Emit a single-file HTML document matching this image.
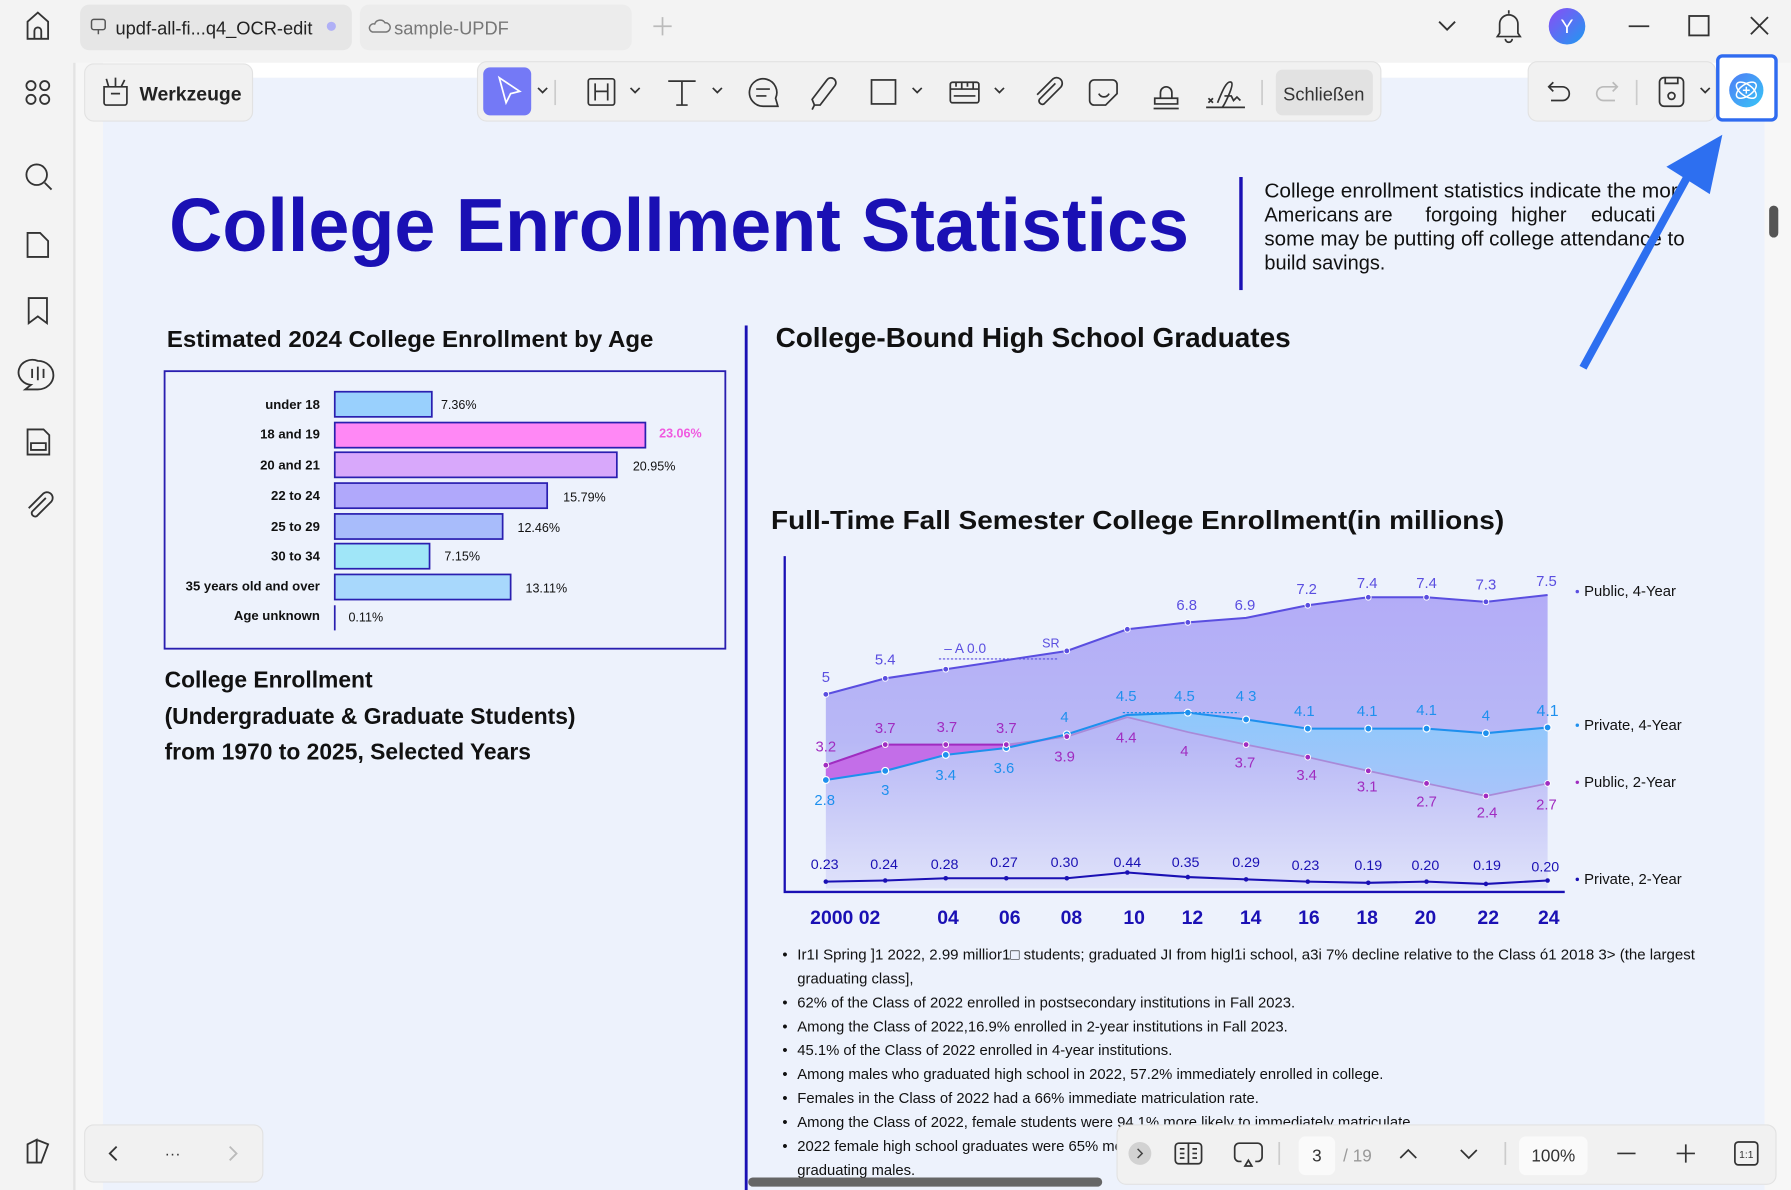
<!DOCTYPE html>
<html><head><meta charset="utf-8"><style>
html,body{margin:0;padding:0;width:1791px;height:1190px;overflow:hidden;background:#f3f3f3;}
svg{display:block}
text{font-family:"Liberation Sans",Arial,sans-serif}
</style></head><body>
<svg width="1791" height="1190" viewBox="0 0 1568 1042" xmlns="http://www.w3.org/2000/svg">
<defs>
<linearGradient id="g4" x1="0" y1="0" x2="0" y2="1"><stop offset="0" stop-color="#b3acf7"/><stop offset="0.5" stop-color="#b8b8f6"/><stop offset="1" stop-color="#dfe2fa"/></linearGradient>
<linearGradient id="gb" x1="0" y1="0" x2="0" y2="1"><stop offset="0" stop-color="#8ec8fb"/><stop offset="1" stop-color="#a9c4fa"/></linearGradient>
<linearGradient id="ai" x1="0" y1="0" x2="1" y2="1"><stop offset="0" stop-color="#4f7cf5"/><stop offset="1" stop-color="#38c6f7"/></linearGradient>
<linearGradient id="av" x1="0" y1="0" x2="1" y2="1"><stop offset="0" stop-color="#8b4cf6"/><stop offset="1" stop-color="#1e9af0"/></linearGradient>
</defs>
<rect width="1568" height="1042" fill="#f3f3f3"/>
<rect x="70" y="4" width="238" height="40" rx="8" fill="#e6e6e6"/>
<rect x="315" y="4" width="238" height="40" rx="8" fill="#ececec"/>
<g fill="none" stroke="#333" stroke-width="1.6">
<path d="M24 34 V19 L33 11 L42 19 V34 Z M30 34 V27 a3 3 0 0 1 6 0 V34"/>
</g>
<rect x="80" y="17" width="12" height="9" rx="2" fill="none" stroke="#555" stroke-width="1.3"/><path d="M86 26 v4" stroke="#555" stroke-width="1.3"/>
<text x="101" y="30" font-size="16" fill="#222">updf-all-fi...q4_OCR-edit</text>
<circle cx="290" cy="23" r="4" fill="#b0b0f6"/>
<path d="M326 28 h12 a4 4 0 0 0 -1 -8 a5 5 0 0 0 -9 1 a3.5 3.5 0 0 0 -2 7z" fill="none" stroke="#777" stroke-width="1.3"/>
<text x="345" y="30" font-size="16" fill="#777">sample-UPDF</text>
<path d="M580 15 v16 M572 23 h16" stroke="#bbb" stroke-width="1.5"/>
<path d="M1260 19 l7 7 l7 -7" fill="none" stroke="#333" stroke-width="1.6"/>
<path d="M1313 29 v-8 a8 8 0 0 1 16 0 v8 l2 3 h-20z M1318 34 a3 3 0 0 0 6 0 M1321 9 v3" fill="none" stroke="#333" stroke-width="1.5"/>
<circle cx="1372" cy="23" r="16" fill="url(#av)"/><text x="1372" y="29" font-size="17" fill="#fff" text-anchor="middle">Y</text>
<path d="M1426 23 h18" stroke="#333" stroke-width="1.6"/>
<rect x="1479" y="14" width="17" height="17" fill="none" stroke="#333" stroke-width="1.6"/>
<path d="M1533 15 l15 15 M1548 15 l-15 15" stroke="#333" stroke-width="1.6"/>
<rect x="0" y="55" width="64" height="987" fill="#f3f3f3"/>
<rect x="64" y="55" width="2" height="987" fill="#e3e3e3"/>
<g fill="none" stroke="#333" stroke-width="1.6">
<circle cx="27" cy="75" r="4"/><circle cx="39" cy="75" r="4"/><circle cx="27" cy="87" r="4"/><circle cx="39" cy="87" r="4"/>
<circle cx="32" cy="153" r="9"/><path d="M39 160 l6 6"/>
<path d="M24 204 h11 l7 7 v14 h-18z"/>
<path d="M25 261 h16 v22 l-8 -6 l-8 6z"/>
<path d="M33 316 a12 11 0 1 0 -6 21 l-5 4 h11 a12 11 0 0 0 0 -25z M28 323 v8 M33 321 v12 M38 323 v8"/>
<path d="M24 376 h14 l5 5 v17 h-19z M27 388 h13 v6 h-13z"/>
<path d="M40 436 l-12 12 a3 3 0 0 0 4 4 l13 -13 a5 5 0 0 0 -7 -7 l-13 13"/>
<path d="M24 1018 v-16 l8 -4 v20 z M32 998 l10 4 l-6 16 h-12"/>
</g>
<rect x="66" y="55" width="1502" height="987" fill="#f6f6f6"/>
<rect x="90" y="68" width="1455" height="974" fill="#edf2fc"/>
<rect x="90" y="55" width="1455" height="13" fill="#ffffff"/>
<rect x="1545" y="55" width="23" height="987" fill="#f7f7f7"/>
<rect x="1549" y="180" width="8" height="28" rx="4" fill="#555"/>
<rect x="74" y="56" width="147" height="50" rx="8" fill="#f1f1f1" stroke="#e2e2e2"/>
<rect x="418" y="54" width="791" height="52" rx="8" fill="#f1f1f1" stroke="#e2e2e2"/>
<rect x="1338" y="54" width="164" height="52" rx="8" fill="#f1f1f1" stroke="#e2e2e2"/>
<g fill="none" stroke="#333" stroke-width="1.5">
<path d="M91 76 h20 v14 a2 2 0 0 1 -2 2 h-16 a2 2 0 0 1 -2 -2z M97 82 h8 M95 76 l-2 -7 M101 76 v-8 M106 76 l3 -6"/>
</g>
<text x="122" y="88" font-size="17" font-weight="bold" fill="#222">Werkzeuge</text>
<rect x="423" y="59" width="42" height="42" rx="6" fill="#7479f6"/>
<path d="M437 68 l18 12 l-8 2 l-4 8z" fill="none" stroke="#fff" stroke-width="1.5"/>
<g fill="none" stroke="#333" stroke-width="1.5">
<path d="M471 77 l4 4 l4 -4"/>
<path d="M486 70 v22" stroke="#ccc"/>
<rect x="515" y="69" width="23" height="23" rx="2"/><path d="M521 73 v15 M532 73 v15 M521 80 h11"/>
<path d="M552 77 l4 4 l4 -4"/>
<path d="M585 71 h24 M597 71 v21 M592 92 h10"/>
<path d="M624 77 l4 4 l4 -4"/>
<path d="M668 93 a12 12 0 1 1 11 -7 l2 7z M662 78 h12 M662 84 h9"/>
<path d="M713 92 l-2 -5 l13 -17 a4 4 0 0 1 7 5 l-13 17z M713 92 l-2 4"/>
<rect x="763" y="70" width="21" height="21"/>
<path d="M799 77 l4 4 l4 -4"/>
<rect x="832" y="72" width="25" height="18" rx="2"/><path d="M832 78 h25 M837 72 v4 M842 72 v6 M847 72 v4 M852 72 v6 M835 84 h19"/>
<path d="M871 77 l4 4 l4 -4"/>
<path d="M924 73 l-14 14 a3 3 0 0 0 4 4 l15 -15 a5 5 0 0 0 -7 -7 l-14 14"/>
<path d="M958 70 h16 a4 4 0 0 1 4 4 v8 l-10 10 h-10 a4 4 0 0 1 -4 -4 v-14 a4 4 0 0 1 4 -4z M962 82 a5 5 0 0 0 9 0"/>
<path d="M1011 86 h20 v5 h-20z M1016 86 v-5 a5 5 0 1 1 10 0 v5 M1010 95 h22"/>
<path d="M1058 86 l4 4 M1062 86 l-4 4 M1056 94 h34 M1066 90 c4 -10 8 -20 12 -18 c3 2 -6 20 -8 22 M1072 84 h6 l2 4 l3 -3 l3 3"/>
<path d="M1105 70 v22" stroke="#ccc"/>
</g>
<rect x="1117" y="61" width="85" height="40" rx="6" fill="#e2e2e2"/>
<text x="1159" y="88" font-size="16" fill="#333" text-anchor="middle">Schließen</text>
<g fill="none" stroke="#333" stroke-width="1.5">
<path d="M1356 76 h12 a6 6 0 0 1 0 12 h-10 M1360 72 l-4 4 l4 4"/>
<path d="M1416 76 h-12 a6 6 0 0 0 0 12 h10 M1412 72 l4 4 l-4 4" stroke="#bbb"/>
<path d="M1433 70 v22" stroke="#ccc"/>
<rect x="1453" y="68" width="21" height="25" rx="4"/><path d="M1458 68 v5 h11 v-5"/><circle cx="1463.5" cy="84" r="3"/>
<path d="M1489 77 l4 4 l4 -4"/>
</g>
<rect x="1504" y="49" width="51" height="56" rx="4" fill="#fff" stroke="#2f6bf0" stroke-width="3"/>
<circle cx="1529" cy="79" r="15" fill="url(#ai)"/>
<g fill="none" stroke="#fff" stroke-width="1.3"><ellipse cx="1529" cy="79" rx="10" ry="5" transform="rotate(-35 1529 79)"/><ellipse cx="1529" cy="79" rx="10" ry="5" transform="rotate(35 1529 79)"/><path d="M1529 76 v6 M1526 79 h6"/></g>
<text x="148" y="220" font-size="66" font-weight="bold" fill="#1a10b4" textLength="893" lengthAdjust="spacingAndGlyphs">College Enrollment Statistics</text>
<rect x="1085" y="155" width="3" height="99" fill="#1a10b4"/>
<g font-size="17.5" fill="#111">
<text x="1107" y="173" textLength="362" lengthAdjust="spacingAndGlyphs">College enrollment statistics indicate the mor</text>
<text x="1107" y="194">Americans</text><text x="1194" y="194">are</text><text x="1248" y="194">forgoing</text><text x="1323" y="194">higher</text><text x="1393" y="194">educati</text>
<text x="1107" y="215" textLength="368" lengthAdjust="spacingAndGlyphs">some may be putting off college attendance to</text>
<text x="1107" y="236">build savings.</text>
</g>
<path d="M1386 322 L1480 150" stroke="#2d6ff0" stroke-width="7" fill="none"/>
<path d="M1508 118 L1497 170 L1459 146 Z" fill="#2d6ff0"/>
<text x="146" y="304" font-size="20.5" font-weight="bold" fill="#111" textLength="426" lengthAdjust="spacingAndGlyphs">Estimated 2024 College Enrollment by Age</text>
<rect x="144" y="325" width="491" height="243" fill="none" stroke="#2a1fb0" stroke-width="1.6"/>
<g font-size="11.5" font-weight="bold" fill="#111" text-anchor="end">
<text x="280" y="358">under 18</text><text x="280" y="384">18 and 19</text><text x="280" y="411">20 and 21</text><text x="280" y="438">22 to 24</text><text x="280" y="465">25 to 29</text><text x="280" y="491">30 to 34</text><text x="280" y="517">35 years old and over</text><text x="280" y="543">Age unknown</text>
</g>
<g stroke="#2a1fb0" stroke-width="1.5">
<rect x="293" y="343" width="85" height="22" fill="#99d0fd"/>
<rect x="293" y="370" width="272" height="22" fill="#ff88f5"/>
<rect x="293" y="396" width="247" height="22" fill="#d8a8fb"/>
<rect x="293" y="423" width="186" height="22" fill="#b0a8fb"/>
<rect x="293" y="450" width="147" height="22" fill="#a8bcfb"/>
<rect x="293" y="476" width="83" height="22" fill="#a0e6f8"/>
<rect x="293" y="503" width="154" height="22" fill="#a8d8fc"/>
<path d="M293 530 v22"/>
</g>
<g font-size="11" fill="#111">
<text x="386" y="358">7.36%</text><text x="554" y="412">20.95%</text><text x="493" y="439">15.79%</text><text x="453" y="466">12.46%</text><text x="389" y="491">7.15%</text><text x="460" y="519">13.11%</text><text x="305" y="544">0.11%</text>
</g>
<text x="577" y="383" font-size="11" font-weight="bold" fill="#f05ae0">23.06%</text>
<g font-size="20" font-weight="bold" fill="#111">
<text x="144" y="602">College Enrollment</text>
<text x="144" y="634">(Undergraduate &amp; Graduate Students)</text>
<text x="144" y="665">from 1970 to 2025, Selected Years</text>
</g>
<rect x="652" y="285" width="2.5" height="757" fill="#1a10b4"/>
<text x="679" y="304" font-size="24" font-weight="bold" fill="#111" textLength="451" lengthAdjust="spacingAndGlyphs">College-Bound High School Graduates</text>
<text x="675" y="463" font-size="23" font-weight="bold" fill="#111" textLength="642" lengthAdjust="spacingAndGlyphs">Full-Time Fall Semester College Enrollment(in millions)</text>
<polygon points="723,608 775,594 828,586 881,578 934,570 987,551 1040,545 1091,541 1145,530 1198,523 1249,523 1301,527 1355,521 1355,778 723,778" fill="url(#g4)"/>
<polygon points="987,626 1040,624 1091,630 1145,638 1198,638 1249,638 1301,642 1355,637 1355,686 1301,697 1249,686 1198,675 1145,663 1091,652 1040,641 987,628" fill="url(#gb)"/>
<polygon points="723,670 775,652 828,652 881,652 934,645 881,655 828,661 775,675 723,683" fill="#c36ee8"/>
<polyline points="723,608 775,594 828,586 881,578 934,570 987,551 1040,545 1091,541 1145,530 1198,523 1249,523 1301,527 1355,521" fill="none" stroke="#5a4ee0" stroke-width="1.8"/>
<polyline points="723,670 775,652 828,652 881,652 934,645 987,628 1040,641 1091,652 1145,663 1198,675 1249,686 1301,697 1355,686" fill="none" stroke="#a98ad8" stroke-width="1.5"/>
<polyline points="723,670 775,652 881,652" fill="none" stroke="#a02cc0" stroke-width="1.8"/>
<polyline points="723,683 775,675 828,661 881,655 934,643 987,626 1040,624 1091,630 1145,638 1198,638 1249,638 1301,642 1355,637" fill="none" stroke="#1e90ee" stroke-width="1.8"/>
<polyline points="723,772 775,771 828,769 881,769 934,769 987,764 1040,768 1091,770 1145,772 1198,773 1249,772 1301,774 1355,771" fill="none" stroke="#1a10b4" stroke-width="1.8"/>
<g fill="#5a4ee0" stroke="#fff" stroke-width="0.8">
<circle cx="723" cy="608" r="2.5"/><circle cx="775" cy="594" r="2.5"/><circle cx="828" cy="586" r="2.5"/><circle cx="934" cy="570" r="2.5"/><circle cx="987" cy="551" r="2.5"/><circle cx="1040" cy="545" r="2.5"/><circle cx="1145" cy="530" r="2.5"/><circle cx="1198" cy="523" r="2.5"/><circle cx="1249" cy="523" r="2.5"/><circle cx="1301" cy="527" r="2.5"/>
</g>
<g fill="#1e90ee" stroke="#fff" stroke-width="1">
<circle cx="723" cy="683" r="3"/><circle cx="775" cy="675" r="3"/><circle cx="828" cy="661" r="3"/><circle cx="881" cy="655" r="3"/><circle cx="934" cy="643" r="3"/><circle cx="1040" cy="624" r="3"/><circle cx="1091" cy="630" r="3"/><circle cx="1145" cy="638" r="3"/><circle cx="1198" cy="638" r="3"/><circle cx="1249" cy="638" r="3"/><circle cx="1301" cy="642" r="3"/><circle cx="1355" cy="637" r="3"/>
</g>
<g fill="#a02cc0" stroke="#fff" stroke-width="0.8">
<circle cx="723" cy="670" r="2.5"/><circle cx="775" cy="652" r="2.5"/><circle cx="828" cy="652" r="2.5"/><circle cx="881" cy="652" r="2.5"/><circle cx="934" cy="645" r="2.5"/><circle cx="1091" cy="652" r="2.5"/><circle cx="1145" cy="663" r="2.5"/><circle cx="1198" cy="675" r="2.5"/><circle cx="1249" cy="686" r="2.5"/><circle cx="1301" cy="697" r="2.5"/><circle cx="1355" cy="686" r="2.5"/>
</g>
<g fill="#1a10b4"><circle cx="723" cy="772" r="2"/><circle cx="775" cy="771" r="2"/><circle cx="828" cy="769" r="2"/><circle cx="881" cy="769" r="2"/><circle cx="934" cy="769" r="2"/><circle cx="987" cy="764" r="2"/><circle cx="1040" cy="768" r="2"/><circle cx="1091" cy="770" r="2"/><circle cx="1145" cy="772" r="2"/><circle cx="1198" cy="773" r="2"/><circle cx="1249" cy="772" r="2"/><circle cx="1301" cy="774" r="2"/><circle cx="1355" cy="771" r="2"/></g>
<g font-size="13" fill="#5a4ee0" text-anchor="middle">
<text x="723" y="597">5</text><text x="775" y="582">5.4</text><text x="1039" y="534">6.8</text><text x="1090" y="534">6.9</text><text x="1144" y="520">7.2</text><text x="1197" y="515">7.4</text><text x="1249" y="515">7.4</text><text x="1301" y="516">7.3</text><text x="1354" y="513">7.5</text>
<text x="845" y="572" font-family="Liberation Mono" font-size="12">– A 0.0</text><text x="920" y="567" font-family="Liberation Mono" font-size="11">SR</text>
</g>
<path d="M822 577 H927" stroke="#5a4ee0" stroke-dasharray="2 1.5"/>
<g font-size="13" fill="#1e90ee" text-anchor="middle">
<text x="722" y="705">2.8</text><text x="775" y="696">3</text><text x="828" y="683">3.4</text><text x="879" y="677">3.6</text><text x="932" y="632">4</text><text x="986" y="614">4.5</text><text x="1037" y="614">4.5</text><text x="1091" y="614">4 3</text><text x="1142" y="627">4.1</text><text x="1197" y="627">4.1</text><text x="1249" y="626">4.1</text><text x="1301" y="631">4</text><text x="1355" y="627" font-size="14">4.1</text>
</g>
<path d="M983 624 H1085" stroke="#1e90ee" stroke-dasharray="2 1.5"/>
<g font-size="13" fill="#a02cc0" text-anchor="middle">
<text x="723" y="658">3.2</text><text x="775" y="642">3.7</text><text x="829" y="641">3.7</text><text x="881" y="642">3.7</text><text x="932" y="667">3.9</text><text x="986" y="650">4.4</text><text x="1037" y="662">4</text><text x="1090" y="672">3.7</text><text x="1144" y="683">3.4</text><text x="1197" y="693">3.1</text><text x="1249" y="706">2.7</text><text x="1302" y="716">2.4</text><text x="1354" y="709">2.7</text>
</g>
<g font-size="12.5" fill="#1a10b4" text-anchor="middle">
<text x="722" y="761">0.23</text><text x="774" y="761">0.24</text><text x="827" y="761">0.28</text><text x="879" y="759">0.27</text><text x="932" y="759">0.30</text><text x="987" y="759">0.44</text><text x="1038" y="759">0.35</text><text x="1091" y="759">0.29</text><text x="1143" y="762">0.23</text><text x="1198" y="762">0.19</text><text x="1248" y="762">0.20</text><text x="1302" y="762">0.19</text><text x="1353" y="763">0.20</text>
</g>
<path d="M687 487 V781 H1370" fill="none" stroke="#1a10b4" stroke-width="2"/>
<g font-size="17" font-weight="bold" fill="#1a10b4" text-anchor="middle">
<text x="740" y="809">2000 02</text><text x="830" y="809">04</text><text x="884" y="809">06</text><text x="938" y="809">08</text><text x="993" y="809">10</text><text x="1044" y="809">12</text><text x="1095" y="809">14</text><text x="1146" y="809">16</text><text x="1197" y="809">18</text><text x="1248" y="809">20</text><text x="1303" y="809">22</text><text x="1356" y="809">24</text>
</g>
<g font-size="13" fill="#111">
<text x="1387" y="522">Public, 4-Year</text><text x="1387" y="639">Private, 4-Year</text><text x="1387" y="689">Public, 2-Year</text><text x="1387" y="774">Private, 2-Year</text>
</g>
<circle cx="1381" cy="518" r="1.5" fill="#5a4ee0"/><circle cx="1381" cy="635" r="1.5" fill="#1e90ee"/><circle cx="1381" cy="685" r="1.5" fill="#a02cc0"/><circle cx="1381" cy="770" r="1.5" fill="#1a10b4"/>
<g font-size="13" fill="#111">
<text x="685" y="840">•</text><text x="698" y="840" textLength="786" lengthAdjust="spacingAndGlyphs">Ir1I Spring ]1 2022, 2.99 millior1□ students; graduated JI from higl1i school, a3i 7% decline relative to the Class ó1 2018 3&gt; (the largest</text>
<text x="698" y="861">graduating class],</text>
<text x="685" y="882">•</text><text x="698" y="882">62% of the Class of 2022 enrolled in postsecondary institutions in Fall 2023.</text>
<text x="685" y="903">•</text><text x="698" y="903">Among the Class of 2022,16.9% enrolled in 2-year institutions in Fall 2023.</text>
<text x="685" y="924">•</text><text x="698" y="924">45.1% of the Class of 2022 enrolled in 4-year institutions.</text>
<text x="685" y="945">•</text><text x="698" y="945">Among males who graduated high school in 2022, 57.2% immediately enrolled in college.</text>
<text x="685" y="966">•</text><text x="698" y="966">Females in the Class of 2022 had a 66% immediate matriculation rate.</text>
<text x="685" y="987">•</text><text x="698" y="987">Among the Class of 2022, female students were 94.1% more likely to immediately matriculate</text>
<text x="685" y="1008">•</text><text x="698" y="1008">2022 female high school graduates were 65% more</text>
<text x="698" y="1029">graduating males.</text>
</g>
<rect x="655" y="1031" width="310" height="8" rx="4" fill="#666"/>
<rect x="74" y="985" width="156" height="50" rx="8" fill="#f1f1f1" stroke="#e2e2e2"/>
<path d="M102 1004 l-6 6 l6 6" fill="none" stroke="#333" stroke-width="1.6"/>
<text x="151" y="1015" font-size="14" fill="#333" text-anchor="middle">···</text>
<path d="M201 1004 l6 6 l-6 6" fill="none" stroke="#bbb" stroke-width="1.6"/>
<rect x="978" y="985" width="577" height="52" rx="8" fill="#f1f1f1" stroke="#e2e2e2"/>
<circle cx="998" cy="1010" r="10" fill="#d2d2d2"/><path d="M996 1006 l4 4 l-4 4" fill="none" stroke="#444" stroke-width="1.3"/>
<g fill="none" stroke="#333" stroke-width="1.5">
<rect x="1029" y="1001" width="23" height="18" rx="3"/><path d="M1040.5 1001 v18 M1033 1006 h4 M1033 1010 h4 M1033 1014 h4 M1044 1006 h4 M1044 1010 h4 M1044 1014 h4"/>
<path d="M1087 1017 h-2 a4 4 0 0 1 -4 -4 v-8 a4 4 0 0 1 4 -4 h16 a4 4 0 0 1 4 4 v8 a4 4 0 0 1 -4 4 h-2 M1090 1021 l3 -5 l3 5z"/>
<path d="M1120 1000 v20 M1318 1000 v20" stroke="#ccc"/>
<path d="M1226 1014 l7 -7 l7 7 M1279 1007 l7 7 l7 -7"/>
<path d="M1416 1010 h16 M1468 1010 h16 M1476 1002 v16"/>
<rect x="1519" y="1000" width="20" height="20" rx="3"/>
</g>
<rect x="1137" y="995" width="32" height="34" rx="6" fill="#fafafa"/>
<text x="1153" y="1017" font-size="15" fill="#333" text-anchor="middle">3</text>
<text x="1176" y="1017" font-size="15" fill="#999">/ 19</text>
<rect x="1330" y="995" width="60" height="34" rx="6" fill="#fafafa"/>
<text x="1360" y="1017" font-size="15" fill="#333" text-anchor="middle">100%</text>
<text x="1529" y="1014" font-size="9" fill="#333" text-anchor="middle">1:1</text>
</svg>
</body></html>
